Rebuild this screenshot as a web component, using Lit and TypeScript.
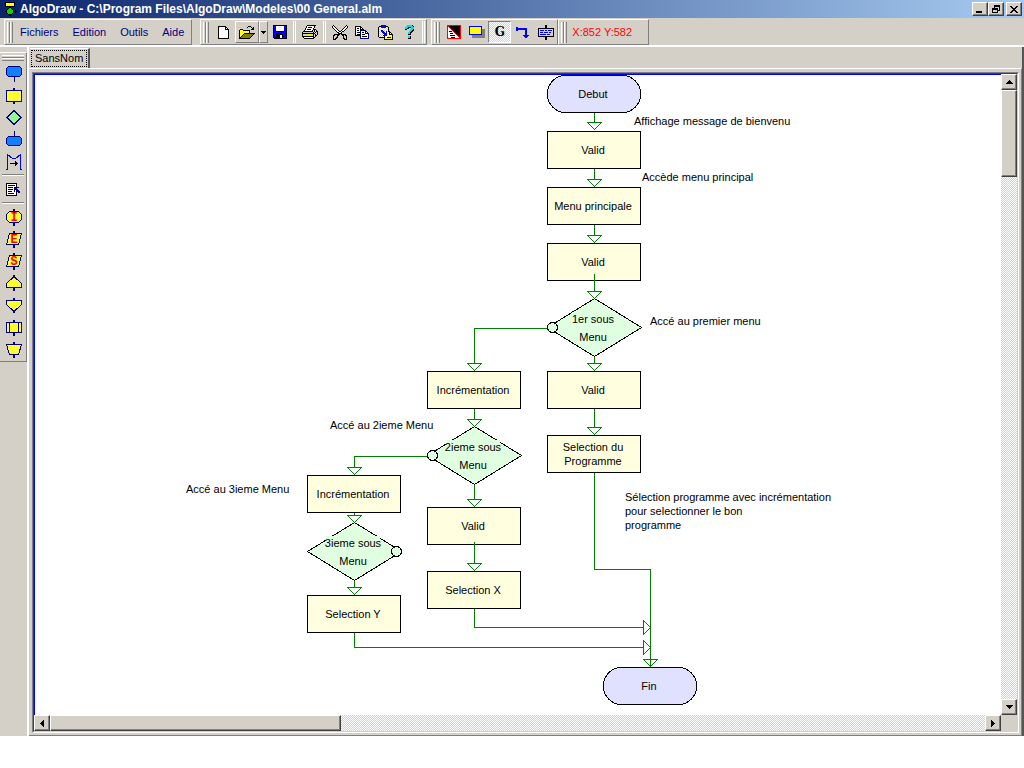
import { LitElement, html, css, svg, type TemplateResult } from "lit";
import { customElement, property, state } from "lit/decorators.js";
import { classMap } from "lit/directives/class-map.js";
import { styleMap } from "lit/directives/style-map.js";

const PALETTE: Record<string, string> = {
  K: "#000000", W: "#ffffff", Y: "#ffff00", O: "#808000", B: "#0000ff", N: "#000080",
  G: "#808080", L: "#d4d0c8", C: "#00e0e8", H: "#00d800", R: "#ff0000",
};

const PIXELS: Record<string, string[]> = {
  fresh: [
    "KKKKKKKK...", "KWWWWWWKK..", "KWWWWWWKWK.", "KWWWWWWKKKK", "KWWWWWWWWWK", "KWWWWWWWWWK",
    "KWWWWWWWWWK", "KWWWWWWWWWK", "KWWWWWWWWWK", "KWWWWWWWWWK", "KWWWWWWWWWK", "KWWWWWWWWWK", "KKKKKKKKKKK",
  ],
  open: [
    ".........KKK....", "........K...K.K.", ".............KK.", ".KKK........KKK.", "KYWYKKKKKKK.....",
    "KWYWYWYWYWK.....", "KYWYWYWYWYK.....", "KWYWYKKKKKKKKKKK", "KYWYKOOOOOOOOOK.", "KWYKOOOOOOOOOK..",
    "KYKOOOOOOOOOK...", "KKOOOOOOOOOK....", "KKKKKKKKKKK.....",
  ],
  save: [
    "KKKKKKKKKKKKKK", "KBBWWWWWWWWBBK", "KBBWWWWWWWWBBK", "KBBWWWWWWWWBBK", "KBBWWWWWWWWBBK", "KBBWWWWWWWWBBK",
    "KBBKKKKKKKKBBK", "KBBBBBBBBBBBBK", "KBBBBBBBBBBBBK", "KBBKKKKKKKBBBK", "KBBKKKKWWKBBBK", "KBBKKKKWWKBBBK",
    "KBBKKKKWWKBBBK", ".KKKKKKKKKKKKK",
  ],
  print: [
    ".....KKKKKKKKK..", "....KWWWWWWWK...", "....KWKKKKWWK...", "...KWWWWWWWK....", "...KWKKKKWWKKK..",
    "..KWWWWWWWKLKLK.", ".KKKKKKKKKKLKLKK", "KLLLLLLLLLLKLKLK", "KKKKKKKKKKKKKLLK", "KLLLLLYYYLLKLKLK",
    "KLLLLLLLLLLKLKK.", "KKKKKKKKKKKKLK..", ".KWWWWWWWWWKK...", "..KKKKKKKKKK....",
  ],
  cut: [
    ".K............K.", "KWK..........KWK", "KWWK........KWWK", ".KWWK......KWWK.", "..KWWK....KWWK..", "...KWWK..KWWK...",
    "....KWWKKWKK....", ".....KKWWK......", "......KKKK......", "..KKKKKK.KKKKK..", ".KK..KK...KK.KK.", ".K...K.....K..K.",
    ".K..KK.....K..K.", ".K.KK......KK.K.", ".KKK........KKK.",
  ],
  copy: [
    "KKKKKK.........", "KWWWWKK........", "KWKKWKWK.......", "KWWWWKKKK......", "KWKKWNNNNNN....", "KWWWWNWWWWNN...",
    "KWKKKNWKKWNWN..", "KWWWWNWWWWNNNN.", "KWKKKNWKKKWWWN.", "KKKKKNWWWWWWWN.", ".....NWKKKKKWN.", ".....NWWWWWWWN.", ".....NNNNNNNNN.",
  ],
  paste: [
    "...BBBBB........", ".KKBBBBBKK......", "KLWBBBBBWLK.....", "KWLWLWLWLWK.....", "KLWLWLWLWLK.....", "KWLBBWLWLWK.....",
    "KLWBBBLWBLKK....", "KWLWBBBWBWWKK...", "KLWLWBBBBWYKWK..", "KWLWLWBBBWWKKKK.", "KLWLWBBBBYWYWYK.", "KWLWLWKWWWYWYWK.",
    ".KKKKKKYWKKKKYK.", "......KWYWYWYWK.", "......KKKKKKKKK.",
  ],
  help: [
    "...CCCCCK.", "..CCCCCCCK", ".CCCKKKCCC", ".CCKK..CCC", ".KK...CCCK", "......CCKK", ".....CCKK.", "....CCKK..",
    "....CCK...", "....KKK...", "..........", "....CCK...", "....CCK...", "....KKK...",
  ],
  contrast: [
    "RRRRRRRRRRRRRR", "RRKKKKKKKKKKKR", "RWRKKKKKKKKKKR", "RWWRKKKKKKKKKR", "RWWWRKKKKKKKKR", "RWWWWRKKKKKKKR", "RWKKKWRKKKKKKR",
    "RWWWWWWRKKKKKR", "RWWKKKWWRKKKKR", "RWWWWWWWWRKKKR", "RWWKKKKKWWRKKR", "RWWWWWWWWWWRKR", "RWWWKKKKWWWWRR", "RRRRRRRRRRRRRR",
  ],
  shadow: [
    "BBBBBBBBBBBBB...", "BYYYYYYYYYYYB...", "BYYYYYYYYYYYB...", "BYYYYYYYYYYYBGGG", "BYYYYYYYYYYYBGGG", "BYYYYYYYYYYYBGGG",
    "BYYYYYYYYYYYBGGG", "BYYYYYYYYYYYBGGG", "BBBBBBBBBBBBBGGG", "...GGGGGGGGGGGGG", "...GGGGGGGGGGGGG", "...GGGGGGGGGGGGG",
  ],
  link: [
    "BB...........", "BBBBBBBBBBB..", "BBBBBBBBBBB..", "BB.......BB..", ".........BB..", ".........BB..", ".........BB..",
    ".........BB..", ".......BBBBBB", "........BBBB.", ".........BB..",
  ],
  comment: [
    ".......KK.......", ".......KK.......", ".......KK.......", "KKKKKKKKKKKKKKKK", "KLLLLLLLLLLLLLLK", "KLBBBBLBBLBBBBLK",
    "KLLLLLLLLLLLLLLK", "KLBBBLBBBBLBBLLK", "KLLLLLLLLLLLLLLK", "KLBBBBBBLBBBLLLK", "KLLLLLLLLLLLLLLK", "KKKKKKKKKKKKKKKK",
    ".......KK.......", ".......KK.......", ".......KK.......",
  ],
  app: [
    "KKKKKKKKKK...", "KYYYYYYYYK...", "KYYYYYYYYK...", "KYYYYYYYYK...", "KKKKKKKKKK...", "....KK.......", "...KHHK......",
    "..KHHHHK.....", ".KHHHHHHK.K..", "KKHHHHHHKKKK.", ".KHHHHHHK.K..", "..KHHHHK.....", "...KKKK......", "....KK.......",
  ],
  script: [
    "KKKKKKKKKKK...", "KWWWWWWWWWK...", "KWKKKKKKKWK...", "KWWWWWWWWWK...", "KWKKKKKWNNNNN.", "KWWWWWWWNNN...",
    "KWKKKKKWNNNN..", "KWWWWWWWNWNNN.", "KWKKKKWWNWKNNN", "KWWWWWWWWWK.NN", "KWKKKKKKWWK...", "KWWWWWWWWWK...", "KKKKKKKKKKK...",
  ],
  min: ["........", "........", "........", "........", "........", "........", "KKKKKK..", "KKKKKK.."],
  restore: ["..KKKKKK", "..KKKKKK", "..K....K", "KKKKKK.K", "KKKKKK.K", "K....KKK", "K....K..", "KKKKKK.."],
  close: ["KK....KK", ".KK..KK.", "..KKKK..", "...KK...", "..KKKK..", ".KK..KK.", "KK....KK"],
  up: ["...K...", "..KKK..", ".KKKKK.", "KKKKKKK"],
  down: ["KKKKKKK", ".KKKKK.", "..KKK..", "...K..."],
  left: ["...K", "..KK", ".KKK", "KKKK", ".KKK", "..KK", "...K"],
  right: ["K...", "KK..", "KKK.", "KKKK", "KKK.", "KK..", "K..."],
  drop: ["KKKKK", ".KKK.", "..K.."],
};

@customElement("pixel-icon")
export class PixelIcon extends LitElement {
  static styles = css`
    :host { display: block; flex: none; }
    .art { display: block; shape-rendering: crispEdges; }
  `;
  @property() name = "fresh";

  render() {
    const rows = PIXELS[this.name] ?? [];
    const width = Math.max(...rows.map((r) => r.length));
    const runs: TemplateResult[] = [];
    rows.forEach((row, y) => {
      for (const m of row.matchAll(/([A-Z])\1*/g)) {
        runs.push(svg`<rect x=${m.index} y=${y} width=${m[0].length} height="1" fill=${PALETTE[m[1]]}></rect>`);
      }
    });
    return html`<svg class="art" width=${width} height=${rows.length} aria-hidden="true">${runs}</svg>`;
  }
}

interface Shape { label: string; art: TemplateResult; }

const SHAPES: Shape[] = [
  { label: "Terminal", art: svg`<path class="b" d="M8.5 4.5h11l2 2v6l-2 2h-11l-2-2v-6z"/><path class="n" d="M14.5 15v5"/>` },
  { label: "Action", art: svg`<path class="y" d="M6.5 6.5h15v11h-15z"/><path class="s" d="M14 4v2M14 18v2"/>` },
  { label: "Condition", art: svg`<path class="g" d="M14 4.5l7 7-7 7-7-7z"/>` },
  { label: "Fin", art: svg`<path class="b" d="M8.5 8.5h11l2 2v5l-2 2h-11l-2-2v-5z"/><path class="n" d="M14.5 3v5"/>` },
  { label: "Liaison", art: svg`<path class="l" d="M6 19.5h1.5v-15l5 4h3l5-4v15h1.5"/><path class="k" d="M10 13.5h8"/><path class="k" d="M15.5 11v5M16.5 12v3"/>` },
];

const MORE_SHAPES: Shape[] = [
  { label: "Initialisation", art: svg`<path class="y" d="M9.5 5.5h9l3 3v5l-3 3h-9l-3-3v-5z"/><path class="s" d="M14 3v3M14 17v3"/><text class="letter" x="14" y="15">I</text>` },
  { label: "Entrée", art: svg`<path class="y" d="M9.5 5.5h12l-3 11h-12z"/><path class="s" d="M14 3v3M14 17v3"/><text class="letter" x="14" y="15">E</text>` },
  { label: "Sortie", art: svg`<path class="y" d="M9.5 5.5h12l-3 11h-12z"/><path class="s" d="M14 3v3M14 17v3"/><text class="letter" x="14" y="15">S</text>` },
  { label: "Début de boucle", art: svg`<path class="y" d="M13 5.5h2l6.5 6v4h-15v-4z"/><path class="s" d="M14 3v3M14 16v3"/>` },
  { label: "Fin de boucle", art: svg`<path class="y" d="M6.5 6.5h15v4l-6.5 6h-2l-6.5-6z"/><path class="s" d="M14 4v2M14 17v2"/>` },
  { label: "Sous-programme", art: svg`<path class="y" d="M6.5 6.5h15v10h-15z"/><path class="k" d="M9.5 7v9M18.5 7v9"/><path class="s" d="M14 4v2M14 17v3"/>` },
  { label: "Opération manuelle", art: svg`<path class="y" d="M6.5 6.5h15l-3 10h-9z"/><path class="s" d="M14 4v2M14 17v3"/>` },
];

type Kind = "step" | "end" | "test";
interface FlowNode { kind: Kind; x: number; y: number; lines: string[]; port?: number; halo?: number; }

const NODES: FlowNode[] = [
  { kind: "end", x: 512, y: 0, lines: ["Debut"] },
  { kind: "step", x: 512, y: 56, lines: ["Valid"] },
  { kind: "step", x: 512, y: 112, lines: ["Menu principale"] },
  { kind: "step", x: 512, y: 168, lines: ["Valid"] },
  { kind: "test", x: 512, y: 224, lines: ["1er sous", "Menu"], port: 5, halo: 42 },
  { kind: "step", x: 512, y: 296, lines: ["Valid"] },
  { kind: "step", x: 512, y: 360, lines: ["Selection du", "Programme"] },
  { kind: "step", x: 392, y: 296, lines: ["Incrémentation"] },
  { kind: "test", x: 392, y: 352, lines: ["2ieme sous", "Menu"], port: 5, halo: 54 },
  { kind: "step", x: 392, y: 432, lines: ["Valid"] },
  { kind: "step", x: 392, y: 496, lines: ["Selection X"] },
  { kind: "step", x: 272, y: 400, lines: ["Incrémentation"] },
  { kind: "test", x: 272, y: 448, lines: ["3ieme sous", "Menu"], port: 89, halo: 54 },
  { kind: "step", x: 272, y: 520, lines: ["Selection Y"] },
  { kind: "end", x: 568, y: 592, lines: ["Fin"] },
];

const NOTES: { x: number; y: number; lines: string[] }[] = [
  { x: 599, y: 50, lines: ["Affichage message de bienvenu"] },
  { x: 607, y: 106, lines: ["Accède menu principal"] },
  { x: 615, y: 250, lines: ["Accé au premier menu"] },
  { x: 295, y: 354, lines: ["Accé au 2ieme Menu"] },
  { x: 151, y: 418, lines: ["Accé au 3ieme Menu"] },
  { x: 590, y: 426, lines: ["Sélection programme avec incrémentation", "pour selectionner le bon", "programme"] },
];

const WIRES: [number, number][][] = [
  [[559, 38], [559, 47]], [[559, 94], [559, 104]], [[559, 150], [559, 160]], [[559, 199], [559, 216]],
  [[559, 282], [559, 288]], [[559, 334], [559, 352]], [[439, 334], [439, 344]], [[439, 410], [439, 424]],
  [[439, 467], [439, 488]], [[319, 438], [319, 440]], [[319, 506], [319, 512]],
  [[511, 253], [439, 253], [439, 288]], [[391, 381], [319, 381], [319, 392]],
  [[559, 398], [559, 494], [615, 494], [615, 590]],
  [[439, 534], [439, 552], [608, 552]], [[319, 558], [319, 572], [608, 572]],
];

const HEAD = 7;
const DOWN_END = 584;

@customElement("flow-chart")
export class FlowChart extends LitElement {
  static styles = css`
    :host { display: block; overflow: hidden; background: #fff; }
    .chart { display: block; shape-rendering: crispEdges; font: 11px "Liberation Sans", Arial, sans-serif; }
    .outline { stroke: #000; }
    .step { fill: #ffffe0; }
    .end { fill: #e0e0ff; }
    .test { fill: #e0ffe0; }
    .wire { fill: none; stroke: #008000; stroke-linecap: square; }
    .head { fill: none; stroke: #008000; }
    .mid { text-anchor: middle; }
  `;

  private node(n: FlowNode) {
    const cx = n.x + 46;
    const x = n.x + 0.5;
    const y = n.y + 0.5;
    if (n.kind === "test") {
      const halo = n.halo ?? 0;
      return svg`
        <path class="outline test" d="M${x + 47} ${y - 1}l47 29l-47 29l-47-29z"></path>
        <rect class="test" x=${cx - halo / 2} y=${n.y + 13} width=${halo} height="14"></rect>
        <circle class="outline test" cx=${n.x + (n.port ?? 0) + 0.5} cy=${y + 28} r="5"></circle>
        ${n.lines.map((t, i) => svg`<text class="mid" x=${cx} y=${n.y + 24 + i * 18}>${t}</text>`)}`;
    }
    const first = n.lines.length > 1 ? 16 : 23;
    return svg`
      <rect class="outline ${n.kind}" x=${x} y=${y} width="93" height="37" rx=${n.kind === "end" ? 18 : 0}></rect>
      ${n.lines.map((t, i) => svg`<text class="mid" x=${cx} y=${n.y + first + i * 14}>${t}</text>`)}`;
  }

  private wire(points: [number, number][]) {
    const [x, y] = points[points.length - 1];
    const sideways = points[points.length - 2][1] === y;
    const px = x + 0.5;
    const py = Math.min(y, DOWN_END) + 0.5;
    const head = sideways
      ? `M${px} ${py - HEAD}v${2 * HEAD}l${HEAD}-${HEAD}z`
      : `M${px - HEAD} ${py}h${2 * HEAD}l-${HEAD} ${HEAD}z`;
    return svg`
      <path class="head" d=${head}></path>
      <polyline class="wire" points=${points.map(([a, b]) => `${a + 0.5},${b + 0.5}`).join(" ")}></polyline>`;
  }

  render() {
    return html`<svg class="chart" width="966" height="640" role="img" aria-label="Algorithme SansNom">
      ${NODES.map((n) => this.node(n))} ${WIRES.map((w) => this.wire(w))}
      ${NOTES.map((n) => n.lines.map((t, i) => svg`<text x=${n.x} y=${n.y + i * 14}>${t}</text>`))}
    </svg>`;
  }
}

@customElement("app-root")
export class AppRoot extends LitElement {
  static styles = css`
    :host {
      display: flex; flex-direction: column; box-sizing: border-box; height: 100vh; padding-bottom: 32px;
      background: #fff; color: #000; font: 11px/14px "Liberation Sans", Arial, sans-serif; overflow: hidden;
    }
    button { font: inherit; color: inherit; margin: 0; padding: 0; border: 0; background: none; border-radius: 0;
      display: flex; align-items: center; justify-content: center; flex: none; }
    .title { display: flex; align-items: center; height: 18px; flex: none; padding: 0 2px 0 5px;
      background: linear-gradient(to right, #0a246a, #a6caf0); color: #fff; }
    .caption { flex: 1; margin: 0 0 0 2px; font: bold 12px/18px "Liberation Sans", Arial, sans-serif; white-space: nowrap; }
    .raised { background: #d4d0c8; border: 1px solid; border-color: #fff #404040 #404040 #fff; box-shadow: inset -1px -1px #808080; }
    .win { width: 16px; height: 14px; box-sizing: border-box; }
    .win.last { margin-left: 2px; }
    .rebar { display: flex; flex: none; height: 26px; padding: 1px 4px 0; background: #d4d0c8; border-bottom: 2px solid #fff; }
    .band { display: flex; align-items: center; box-sizing: border-box; border: 1px solid; border-color: #fff #808080 #808080 #fff; }
    .menu { margin-right: 8px; color: #000080; }
    .tools { margin-right: 4px; padding-right: 1px; }
    .menu button { padding: 0 7px; height: 22px; }
    .grips { display: flex; flex: none; margin: 0 2px; }
    .menu .grips { margin: 0 0 0 2px; }
    .tools .grips { margin: 0 3px 0 2px; }
    .grip { width: 1px; height: 21px; border: solid; border-width: 0 1px; border-color: #fff #808080 #808080 #fff; }
    .tool { width: 23px; height: 22px; box-sizing: border-box; }
    .split { border: 1px solid; border-color: #fff #808080 #808080 #fff; }
    .open { width: 24px; }
    .arrow { width: 9px; }
    .pressed { border: 1px solid; border-color: #808080 #fff #fff #808080;
      background: repeating-conic-gradient(#fff 0 25%, #d4d0c8 0 50%) 0 0 / 2px 2px; font: bold 12px/14px "DejaVu Serif", serif; }
    .rule { flex: none; width: 1px; height: 22px; margin: 0 2px; border: solid; border-width: 0 1px; border-color: #808080 #fff; }
    .rule.tail { margin: 0 0 0 2px; }
    .coords { color: #f00; width: 76px; padding-left: 3px; white-space: nowrap; }
    .body { display: flex; flex: 1; min-height: 0; background: #d4d0c8; }
    .side { width: 27px; flex: none; padding-top: 5px; box-sizing: border-box; }
    .palette { border: solid; border-width: 1px 1px 1px 0; border-color: #fff #808080 #808080; padding-bottom: 1px; }
    .hgrips { padding: 2px 0 1px; }
    .hgrip { height: 1px; margin: 0 2px; border: solid; border-width: 1px 0; border-color: #fff #808080 #808080; }
    .shape { width: 26px; height: 22px; }
    .shape svg { display: block; shape-rendering: crispEdges; fill: none; }
    .b, .y, .g, .s, .n { stroke: #000080; }
    .b { fill: #1080ff; }
    .y { fill: #ffff30; }
    .g { fill: #98f890; }
    .s { stroke-width: 2; }
    .l { stroke: #00f; }
    .k { stroke: #000; }
    .letter { font: bold 12px "Liberation Mono", monospace; fill: #f00; text-anchor: middle; }
    .hrule { height: 0; margin: 2px; border: solid; border-width: 1px 0; border-color: #808080 #fff #fff; }
    .main { display: flex; flex-direction: column; flex: 1; min-width: 0; border-left: 2px solid #fff; border-right: 2px solid #555; }
    .tabs { display: flex; align-items: flex-end; height: 21px; flex: none; padding-left: 1px; }
    .tab { height: 20px; padding: 0 1px 1px 1px; border: solid; border-width: 1px 2px 0 0; border-color: #fff #555; }
    .focus { border: 1px dotted #000; padding: 1px 3px; line-height: 13px; height: 17px; box-sizing: border-box; }
    .panel { display: flex; flex: 1; min-height: 0; padding: 3px 2px 2px 3px; border: solid; border-width: 1px 1px 1px 0; border-color: #fff #808080 #808080; }
    .view { flex: 1; min-width: 0; display: flex; border: 1px solid; border-color: #808080 #fff #fff #808080; }
    .inner { flex: 1; min-width: 0; border: 1px solid; border-color: #404040 #d4d0c8 #d4d0c8 #404040;
      display: grid; grid-template-columns: minmax(0, 1fr) 16px; grid-template-rows: minmax(0, 1fr) 16px; }
    .canvas { border: solid #00f; border-width: 1px 0 0 1px; min-width: 0; min-height: 0; }
    .bar { display: flex; background: repeating-conic-gradient(#fff 0 25%, #d4d0c8 0 50%) 0 0 / 2px 2px; }
    .bar.v { flex-direction: column; }
    .bar button { width: 16px; height: 16px; box-sizing: border-box; }
    .thumb { flex: none; box-sizing: border-box; }
    .track { flex: 1; min-width: 0; min-height: 0; display: flex; }
    .v .track { flex-direction: column; }
  `;

  @state() private grid = true;

  private grips() {
    return html`<span class="grips"><span class="grip"></span><span class="grip"></span></span>`;
  }

  private tool(icon: string, label: string, extra = "") {
    return html`<button class="tool ${extra}" aria-label=${label}><pixel-icon name=${icon}></pixel-icon></button>`;
  }

  private shape(s: Shape) {
    return html`<button class="shape" aria-label=${s.label}><svg width="26" height="22">${s.art}</svg></button>`;
  }

  render() {
    return html`
      <header class="title">
        <pixel-icon name="app"></pixel-icon>
        <h1 class="caption">AlgoDraw - C:\\Program Files\\AlgoDraw\\Modeles\\00 General.alm</h1>
        <button class="win raised" aria-label="Réduire"><pixel-icon name="min"></pixel-icon></button>
        <button class="win raised" aria-label="Restaurer"><pixel-icon name="restore"></pixel-icon></button>
        <button class="win last raised" aria-label="Fermer"><pixel-icon name="close"></pixel-icon></button>
      </header>
      <div class="rebar">
        <nav class="band menu">${this.grips()}${["Fichiers", "Edition", "Outils", "Aide"].map((m) => html`<button>${m}</button>`)}</nav>
        <div class="band tools">
          ${this.grips()}${this.tool("fresh", "Nouveau")}${this.tool("open", "Ouvrir", "open split")}${this.tool("drop", "Récents", "arrow split")}
          ${this.tool("save", "Enregistrer")}<span class="rule"></span>${this.tool("print", "Imprimer")}<span class="rule"></span>
          ${this.tool("cut", "Couper")}${this.tool("copy", "Copier")}${this.tool("paste", "Coller")}${this.tool("help", "Aide")}
          <span class="rule tail"></span>
        </div>
        <div class="band">
          ${this.grips()}${this.tool("contrast", "Couleurs")}${this.tool("shadow", "Ombre")}
          <button class=${classMap({ tool: true, pressed: this.grid })} @click=${() => (this.grid = !this.grid)}>G</button>
          ${this.tool("link", "Lien")}${this.tool("comment", "Commentaire")}
        </div>
        <div class="band">${this.grips()}<output class="coords">X:852 Y:582</output></div>
      </div>
      <div class="body">
        <aside class="side">
          <div class="palette">
            <div class="hgrips"><div class="hgrip"></div><div class="hgrip"></div></div>
            ${SHAPES.map((s) => this.shape(s))}
            <div class="hrule"></div>
            <button class="shape" aria-label="Commentaire"><pixel-icon name="script"></pixel-icon></button>
            <div class="hrule"></div>
            ${MORE_SHAPES.map((s) => this.shape(s))}
          </div>
        </aside>
        <main class="main">
          <div class="tabs" role="tablist"><button class="tab" role="tab" aria-selected="true"><span class="focus">SansNom</span></button></div>
          <section class="panel">
            <div class="view">
              <div class="inner">
                <flow-chart class="canvas"></flow-chart>
                <div class="bar v">
                  <button class="raised" aria-label="Haut"><pixel-icon name="up"></pixel-icon></button>
                  <div class="track"><div class="thumb raised" style=${styleMap({ height: "14.3%" })}></div></div>
                  <button class="raised" aria-label="Bas"><pixel-icon name="down"></pixel-icon></button>
                </div>
                <div class="bar">
                  <button class="raised" aria-label="Gauche"><pixel-icon name="left"></pixel-icon></button>
                  <div class="track"><div class="thumb raised" style=${styleMap({ width: "31.1%" })}></div></div>
                  <button class="raised" aria-label="Droite"><pixel-icon name="right"></pixel-icon></button>
                </div>
              </div>
            </div>
          </section>
        </main>
      </div>`;
  }
}
